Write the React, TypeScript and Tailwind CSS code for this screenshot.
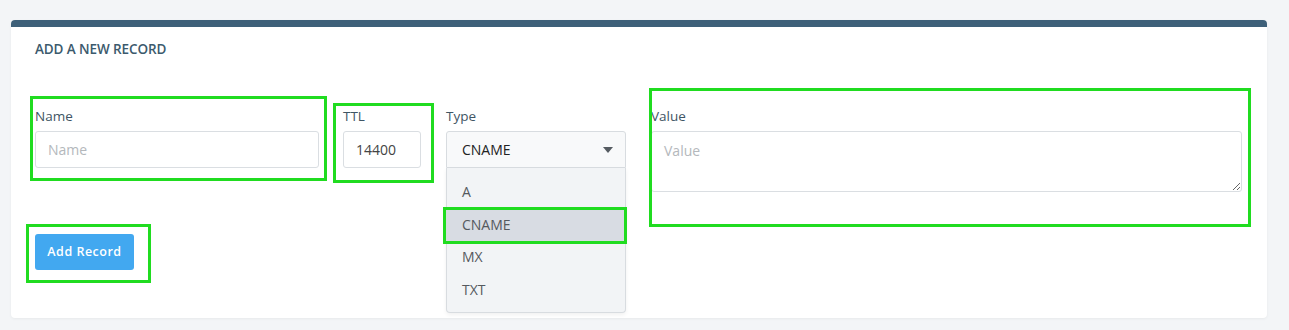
import * as React from "react"

const font = { fontFamily: '"Open Sans", "Noto Sans", sans-serif' }

function Label({ children }: { children: React.ReactNode }) {
  return <div className="h-[22px] text-[13.5px] leading-[22px] text-[#3f5564]">{children}</div>
}

function Highlight({ className }: { className: string }) {
  return <div className={`pointer-events-none absolute z-20 border-[3px] border-[#20dc20] ${className}`} />
}

export default function App() {
  const options = ["A", "CNAME", "MX", "TXT"]

  return (
    <div className="relative h-[330px] w-full bg-[#f3f5f7] pl-[11px] pr-[22px] pt-[20px]" style={font}>
      <div className="h-[298px] rounded-[4px] bg-white shadow-[0_1px_3px_rgba(0,0,0,0.05)]">
        <div className="h-[7px] rounded-t-[4px] bg-[#3e6079]" />
        <div className="px-[24px] pr-[25px]">
          <h2 className="pt-[13px] text-[13.5px] font-semibold leading-[18px] tracking-[-0.1px] text-[#3c5a6d]">
            ADD A NEW RECORD
          </h2>

          <div className="mt-[47px] flex items-start">
            <div className="w-[284px]">
              <Label>Name</Label>
              <input
                placeholder="Name"
                className="mt-[4px] h-[37px] w-full rounded-[3px] border border-[#dadee2] px-[12px] text-[14px] text-[#333] outline-none placeholder:text-[#b4b8bc]"
              />
            </div>

            <div className="ml-[24px] w-[78px]">
              <Label>TTL</Label>
              <input
                defaultValue="14400"
                className="mt-[4px] h-[37px] w-full rounded-[3px] border border-[#dadee2] px-[12px] text-[14px] text-[#444] outline-none"
              />
            </div>

            <div className="relative ml-[25px] w-[180px]">
              <Label>Type</Label>
              <div className="mt-[4px] flex h-[37px] items-center justify-between rounded-t-[3px] border border-[#d8dce0] bg-[#f8f9fa] pl-[15px] pr-[12px] text-[14px] text-[#222]">
                <span>CNAME</span>
                <svg width="10" height="6" viewBox="0 0 10 6">
                  <path d="M0 0h10L5 6z" fill="#555b61" />
                </svg>
              </div>
              <div className="absolute left-0 top-[63px] z-10 w-[180px] rounded-b-[4px] border border-t-0 border-[#d8dce0] bg-[#f2f4f6] pb-[6px] pt-[8px] shadow-[0_2px_4px_rgba(0,0,0,0.06)]">
                {options.map((o) => (
                  <div
                    key={o}
                    className={`h-[32.5px] pl-[15px] text-[14px] leading-[32.5px] text-[#55595e] ${
                      o === "CNAME" ? "bg-[#d8dce3]" : ""
                    }`}
                  >
                    {o}
                  </div>
                ))}
              </div>
            </div>

            <div className="ml-[25px] flex-1">
              <Label>Value</Label>
              <textarea
                placeholder="Value"
                className="mt-[4px] block h-[61px] w-full resize-y rounded-[3px] border border-[#dadee2] px-[12px] py-[8px] text-[14px] text-[#333] outline-none placeholder:text-[#b4b8bc]"
              />
            </div>
          </div>

          <button className="mt-[42px] h-[36px] w-[99px] rounded-[3px] bg-[#42a8f0] text-[12.5px] font-semibold tracking-[0.5px] text-white">
            Add Record
          </button>
        </div>
      </div>

      <Highlight className="left-[30px] top-[96px] h-[85px] w-[297px]" />
      <Highlight className="left-[333px] top-[103px] h-[80px] w-[101px]" />
      <Highlight className="left-[443px] top-[207px] h-[37px] w-[184px]" />
      <Highlight className="left-[649px] top-[88px] h-[139px] w-[602px]" />
      <Highlight className="left-[26px] top-[224px] h-[59px] w-[125px]" />
    </div>
  )
}
